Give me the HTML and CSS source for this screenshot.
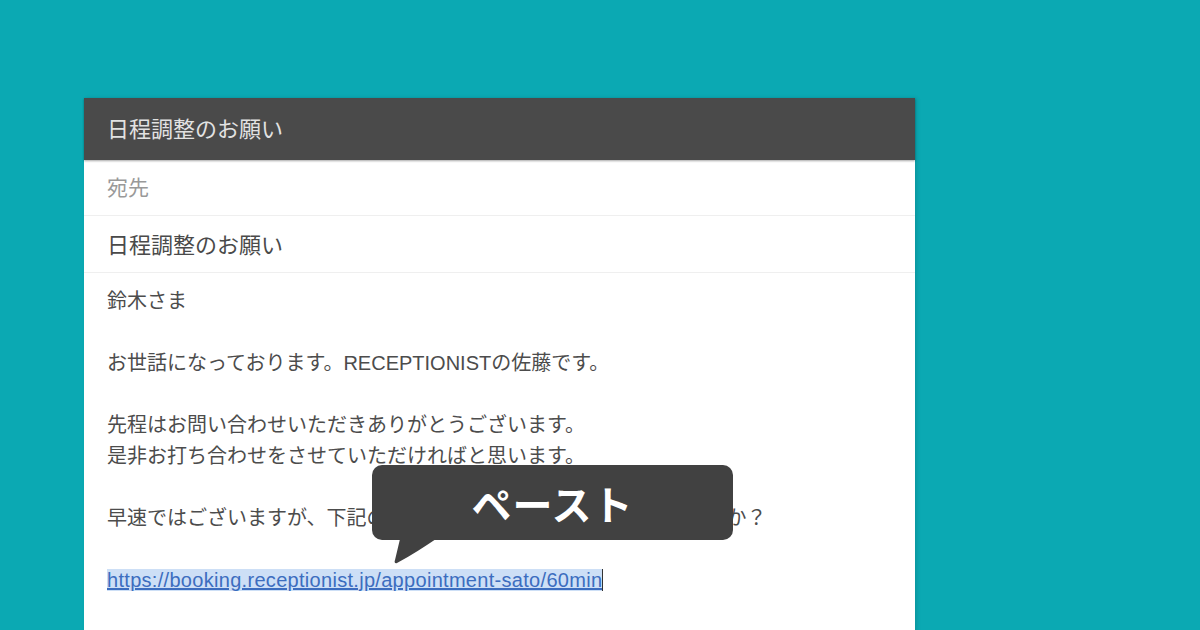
FILE: index.html
```html
<!DOCTYPE html>
<html lang="ja">
<head>
    <meta charset="UTF-8">
    <meta name="viewport" content="width=device-width, initial-scale=1.0">
    <title>日程調整のお願い</title>
    <link rel="stylesheet" href="styles.css">
</head>
<body>
    <div class="mail">
        <div class="mail-head">日程調整のお願い</div>
        <div class="field field-to">宛先</div>
        <div class="field field-subject">日程調整のお願い</div>
        <div class="mail-body">
            <p>鈴木さま</p>
            <p>お世話になっております。RECEPTIONISTの佐藤です。</p>
            <p>先程はお問い合わせいただきありがとうございます。<br>是非お打ち合わせをさせていただければと思います。</p>
            <p class="nowrap">早速ではございますが、下記のURLよりご予約いただけますでしょうか？</p>
            <p><a class="link" href="#">https://booking.receptionist.jp/appointment-sato/60min</a><span class="caret"></span></p>
        </div>
        <div class="bubble">
            ペースト
            <svg class="bubble-tail" width="44" height="26" viewBox="0 0 44 26">
                <path d="M6 0 L42 0 C30 8 18 16 3 24 C1 25 0 23 1 21 Z" fill="#414141"/>
            </svg>
        </div>
    </div>
</body>
</html>
```

FILE: styles.css
```css
body {
    margin: 0;
    padding: 98px 0 0 84px;
    width: 1200px;
    height: 630px;
    box-sizing: border-box;
    overflow: hidden;
    background-color: #0ba9b3;
    font-family: 'Liberation Sans', 'Noto Sans CJK JP', sans-serif;
    color: #4c4c4c;
}
.mail {
    position: relative;
    width: 831px;
    height: 540px;
    background-color: #fff;
    box-shadow: 2px 0 4px rgba(0, 0, 0, 0.12);
}
.mail-head {
    height: 62px;
    display: flex;
    align-items: center;
    padding: 0 23px 4px;
    box-sizing: border-box;
    background-color: #4a4a4a;
    color: #e2e2e2;
    font-size: 22px;
    box-shadow: 0 1px 2px rgba(0, 0, 0, 0.35);
}
.field {
    height: 56px;
    display: flex;
    align-items: center;
    padding: 0 23px 3px;
    box-sizing: border-box;
    border-bottom: 1px solid #efefef;
    font-size: 21px;
}
.field-to {
    color: #999;
}
.field-subject {
    height: 57px;
    color: #4a4a4a;
    font-size: 22px;
}
.mail-body {
    padding: 13px 23px;
    font-size: 20px;
    line-height: 31px;
}
.mail-body p {
    margin: 0 0 31px 0;
}
.nowrap {
    white-space: nowrap;
}
.link {
    color: #3c6dbf;
    text-decoration: underline;
    background-color: #cddff6;
    letter-spacing: 0.3px;
}
.caret {
    display: inline-block;
    width: 1px;
    height: 22px;
    background-color: #333;
    vertical-align: -4px;
}
.bubble {
    position: absolute;
    left: 288px;
    top: 367px;
    width: 361px;
    height: 75px;
    border-radius: 10px;
    background-color: #414141;
    color: #fff;
    font-family: 'Noto Sans CJK JP', sans-serif;
    font-weight: 700;
    font-size: 40px;
    letter-spacing: 1px;
    display: flex;
    align-items: center;
    justify-content: center;
}
.bubble-tail {
    position: absolute;
    left: 22px;
    top: 74px;
}
```
